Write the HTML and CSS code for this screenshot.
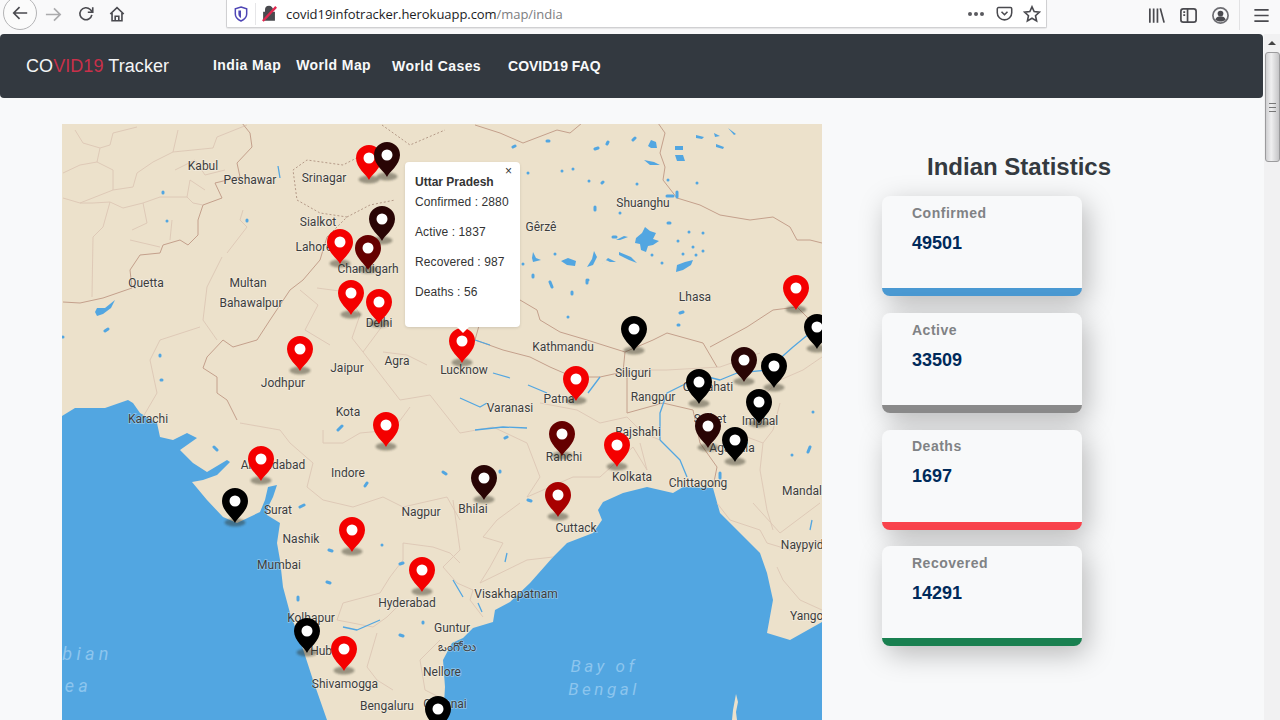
FILE: index.html
```html
<!DOCTYPE html>
<html lang="en">
<head>
<meta charset="utf-8">
<title>COVID19 Tracker</title>
<link rel="stylesheet" href="styles.css">
</head>
<body>
<header class="toolbar">
  <div class="nav-buttons">
    <span class="back-btn"><svg class="ico" viewBox="0 0 20 20"><path d="M18 10H3M9.500 3.500L3 10l6.500 6.500"/></svg></span>
    <svg class="ico fwd" viewBox="0 0 20 20"><path d="M2 10h15M10.500 3.500L17 10l-6.500 6.500"/></svg>
    <svg class="ico reload" viewBox="0 0 20 20"><path d="M16.500 11a6.700 6.700 0 1 1-1.800-6L17 7.500M17.500 2.500v5.500h-5.500"/></svg>
    <svg class="ico home" viewBox="0 0 20 20"><path d="M2.500 10L10 3l7.500 7M4.500 9v8.500h11V9M8 17.500v-5h4v5"/></svg>
  </div>
  <div class="urlbar">
    <svg class="shield" viewBox="0 0 16 18"><path d="M8 1l6.500 2v6c0 4-3 6.500-6.500 8-3.500-1.500-6.500-4-6.500-8V3z"/><path class="shield-in" d="M8 5v8.500C6 12.500 5 11 5 9V5z"/></svg>
    <span class="url-sep"></span>
    <svg class="lock" viewBox="0 0 18 18"><path class="lock-body" d="M3 8h11v8H3zM5 8V5a3.500 3.500 0 0 1 7 0v3"/><path class="lock-slash" d="M2 17L16 2"/></svg>
    <span class="url-text">covid19infotracker.herokuapp.com<span class="url-path">/map/india</span></span>
    <span class="url-actions">
      <span class="dots"><i></i><i></i><i></i></span>
      <svg class="ico pocket" viewBox="0 0 20 20"><path d="M3 3h14a1.500 1.500 0 0 1 1.500 1.500V9a8.500 8.500 0 0 1-17 0V4.500A1.500 1.500 0 0 1 3 3zM6.500 8l3.500 3.500L13.500 8"/></svg>
      <svg class="ico star" viewBox="0 0 20 20"><path d="M10 2l2.400 5.300 5.800.7-4.300 3.900 1.200 5.700L10 14.700l-5.100 2.900 1.200-5.700L1.800 8l5.800-.7z"/></svg>
    </span>
  </div>
  <div class="tools">
    <svg class="ico" viewBox="0 0 20 20"><path d="M3 2.500v15M7 2.500v15M11 2.500v15M14 2.500l4 15"/></svg>
    <svg class="ico" viewBox="0 0 20 20"><rect x="2" y="3" width="16" height="14" rx="2.500"/><path d="M9 3v14M4.500 6.500h2M4.500 9.500h2"/></svg>
    <svg class="ico ico-account" viewBox="0 0 20 20"><circle cx="10" cy="10" r="8"/><circle class="solid" cx="10" cy="8" r="3"/><path class="solid" d="M4.500 14.500c1-3 3-3.500 5.500-3.500s4.500.5 5.500 3.500c-3 2.500-8 2.500-11 0z"/></svg>
    <span class="tool-sep"></span>
    <svg class="ico" viewBox="0 0 20 20"><path d="M2.500 4h15M2.500 10h15M2.500 16h15"/></svg>
  </div>
</header>

<div class="viewport">
  <div class="page">
    <nav class="navbar">
      <a class="brand">CO<span class="brand-red">VID19</span> Tracker</a>
      <a class="link link-india">India Map</a>
      <a class="link link-world">World Map</a>
      <a class="link link-cases">World Cases</a>
      <a class="link link-faq">COVID19 FAQ</a>
    </nav>

    <main class="content">
      <section class="map">
        <svg class="map-svg" viewBox="62 124 760 596" width="760" height="596">
          <defs>
            <filter id="soft" x="-50%" y="-50%" width="200%" height="200%"><feGaussianBlur stdDeviation="1"/></filter>
            <g id="pin">
              <ellipse class="pin-shadow" cx="0" cy="21.500" rx="10.500" ry="4" filter="url(#soft)"/>
              <path class="pin-body" d="M0 22C-2 17-13 10-13 0A13 13 0 1 1 13 0C13 10 2 17 0 22Z"/>
              <circle class="pin-dot" r="5.500"/>
            </g>
          </defs>
          <rect class="land" x="62" y="124" width="760" height="596"/>

          <path class="water" d="M62 416L75 408 105 408 128 400 133 403 140 413 157 423 160 437 173 440 187 433 197 438 180 450 193 463 207 472 227 460 230 462 217 475 203 480 192 482 207 500 223 517 237 523 260 512 265 500 268 487 277 485 273 497 268 507 267 515 280 523 277 543 280 560 283 587 290 613 300 640 313 680 327 720 62 720Z"/>
          <path class="water" d="M443 720L445 687 443 660 452 643 463 638 473 628 493 622 495 610 510 602 530 583 553 557 567 543 593 533 602 520 598 510 603 502 623 493 647 487 673 493 683 487 713 488 720 513 740 533 760 553 767 573 773 600 767 633 790 640 822 622 822 720Z"/>
          <path class="island" d="M736 694l2 8-2 10 1 8h-5l1-10z"/>

          <path class="prov" d="M75 130L83 143 100 148 97 162 80 165 63 173M100 148L110 145 113 133 137 127M97 162L113 170 113 190 133 187 137 173 153 162 173 152 178 130M113 190L80 203 63 198M80 203L93 203 110 202 123 208 143 203M110 202L103 227 93 237 92 297M143 203L160 197 187 197 193 203 203 205M173 152L193 150 213 148 217 137 247 125M132 230L147 223 143 203M130 240L160 247M172 220L170 240M200 327L160 340 150 360 157 393 143 417M222 257L207 287 203 320 217 340M243 210L240 220 247 227 227 253M175 170L195 160 205 175 225 170M187 197L190 180 205 190"/>
          <path class="prov" d="M240 423L280 430 290 443 313 463 307 487 323 500 353 507 383 497 403 507 447 497M403 543L403 560 390 577 380 593 343 603 337 620 373 627 387 617 397 607M403 543L433 547 450 553 460 563M377 633L367 667 377 680 393 690M323 430L323 443 343 443 360 433 393 430 410 407M447 497L460 520M453 500L460 550 443 567 457 583 473 590 470 600 483 617M497 520L483 537 503 543 490 567 480 583M480 583L527 560 553 557M497 520L520 503M460 433L493 427 527 443 540 477 527 497 573 477 600 477 633 447 647 470 640 443M540 403L577 410 600 423 627 417 643 433 660 440M317 288L347 292 360 315 352 338 363 352 383 325M383 352L407 355 427 365M363 352L400 400 430 395 460 433M640 370L667 370 720 367 760 353M747 410L780 380 803 370 822 357M747 437L763 443 773 430 780 403M763 443L760 470 767 510 773 530M717 503L730 520 760 530 767 543 790 550 822 540M777 567L783 580 800 600 822 610M753 503L780 533 820 503M300 290L318 305 305 330 330 345M440 640L420 660 425 690 445 700"/>
          <path class="border" d="M63 302L80 303 103 298 132 288 130 270 140 255 160 253 163 245 180 240 188 245 198 235 198 220 203 205 222 198 215 183 240 177 237 163 252 147 250 133 242 123M237 420L227 400 217 393 217 377 203 368 207 357 223 340 233 347 257 340 270 320 290 290 303 280 320 260 327 237M658 123L665 133 660 153 665 167 663 180 677 198 700 205 720 215 750 220 773 217 790 227 797 240 810 240 822 243M475 125L500 133 523 143 557 130 570 133 582 123M475 340L503 350 530 357 550 367 573 377 600 377 623 372 625 352 587 340 560 332 540 320 537 310 520 300 480 322ZM625 352L653 340 667 333 703 343 717 367M710 347L747 327 773 310 797 307 813 323M627 370L627 413 663 403 693 410 700 443 717 467 713 487"/>
          <path class="dashed" d="M327 237L347 217 320 213 297 200 293 170 307 160 343 165 372 150M347 217L370 205 395 200M382 125L410 145 445 130"/>

          <path class="river" d="M660 440L660 413 667 393 687 383 700 375 720 380 737 373 767 370 793 347 810 333M660 440L680 460 687 477M460 398L480 407 487 403M493 373L510 378M528 385L547 393M475 430L503 427 527 428M588 393L600 377M278 166L280 178M343 627L357 630 380 620M475 340L490 345M453 580L463 597M478 603L482 612M507 553L505 562M812 520L810 530"/>
          <path class="lake-fill" d="M636 238l6-5 3-6 5 4 6 2-3 6 6 2-6 4-5 1-2 6-5-2-1-6-5-1zM676 272l1-7 8-3 8-2-2 5-8 5zM561 261l7-3 8 3-1 5-8-1zM587 267l5-8 2-8 3 6-4 8zM602 264l6-6 8 4-6 0-4-2zM533 252l3 6 5 2-8 2-1-4zM95 312l2-4 8 0 10-8-4 8-8 6-6 2zM620 240l-4 0 8-4 4 1zM619 252l12 5 6 6-8-3-10-5zM644 160l10 2 6 3-10 0zM675 155l8 0 2 6-8 0zM648 146l3-6 5 2 1 6-6 0zM675 146l8 0 0 4-8 0zM696 135l8 2-2 2-6-1zM714 133l6 3-5 1zM728 128l8 6-2 1zM716 144l8 3-1 2-7-2z"/>
          <path class="lakes" d="M613 237l3 0M513 147l2-1M595 149l3-1M633 140l2-2M607 144l1-2M547 141l2 0M562 171l0 0M573 169l0 0M528 173l0 0M589 181l0 0M602 183l1-1M637 184l0 0M697 183l0 0M668 180l0 0M667 196l6 0M677 192l0 5M595 210l0-3M620 213l0 0M668 223l2 0M689 232l0 0M703 233l0 0M678 241l0 0M693 247l0 0M703 251l0 0M683 254l0 0M696 255l0 0M662 263l0 0M652 255l0 0M555 254l0 0M587 280l0 3M550 282l2 5M572 292l0 2M533 277l0-2M523 264l0 0M105 331l3-2M163 192l0 1M167 221l0 0M247 221l0-1M160 355l0 1M161 380l1 0M63 337l0 0M217 450l-3-3M338 430l4-4M365 486l2-3M300 507l4-2M332 551l-3-1M382 545l0 0M327 582l3 1M298 597l0 3M400 564l3-1M400 635l3 1M423 623l0-1M443 472l3 2M505 438l2-1M528 500l3 1M500 472l0-1M720 473l0 5M568 317l0 0M588 280l0 0M680 313l3-1M678 325l1 0M792 455l0 0M813 412l0 0M810 447l-2 5"/>

          <g class="lbl">
            <text x="203" y="170">Kabul</text><text x="250" y="184">Peshawar</text><text x="324" y="182">Srinagar</text>
            <text x="318" y="226">Sialkot</text><text x="314" y="251">Lahore</text><text x="368" y="273">Chandigarh</text>
            <text x="146" y="287">Quetta</text><text x="248" y="287">Multan</text><text x="251" y="307">Bahawalpur</text>
            <text x="283" y="387">Jodhpur</text><text x="347" y="372">Jaipur</text><text x="397" y="365">Agra</text>
            <text x="379" y="327">Delhi</text><text x="464" y="374">Lucknow</text><text x="348" y="416">Kota</text>
            <text x="148" y="423">Karachi</text><text x="273" y="469">Ahmedabad</text><text x="348" y="477">Indore</text>
            <text x="278" y="514">Surat</text><text x="301" y="543">Nashik</text><text x="279" y="569">Mumbai</text>
            <text x="421" y="516">Nagpur</text><text x="473" y="513">Bhilai</text><text x="407" y="607">Hyderabad</text>
            <text x="311" y="622">Kolhapur</text><text x="324" y="655">Hubli</text><text x="345" y="688">Shivamogga</text>
            <text x="387" y="710">Bengaluru</text><text x="445" y="708">Chennai</text><text x="452" y="632">Guntur</text>
            <text x="457" y="651">ఒంగోలు</text>
            <text x="442" y="676">Nellore</text><text x="516" y="598">Visakhapatnam</text><text x="576" y="532">Cuttack</text>
            <text x="564" y="461">Ranchi</text><text x="559" y="403">Patna</text><text x="510" y="412">Varanasi</text>
            <text x="563" y="351">Kathmandu</text><text x="633" y="377">Siliguri</text><text x="653" y="401">Rangpur</text>
            <text x="638" y="436">Rajshahi</text><text x="632" y="481">Kolkata</text><text x="698" y="487">Chittagong</text>
            <text x="708" y="391">Guwahati</text><text x="760" y="425">Imphal</text><text x="710" y="423">Sylhet</text>
            <text x="732" y="452">Agartala</text><text x="802" y="495">Mandal</text><text x="810" y="549">Naypyidaw</text>
            <text x="810" y="620">Yangon</text><text x="695" y="301">Lhasa</text><text x="643" y="207">Shuanghu</text>
            <text x="541" y="231">Gêrzê</text>
          </g>
          <g class="sea-lbl">
            <text x="23" y="660">Arabian</text><text x="50" y="692">Sea</text>
            <text class="sea-mid" x="604" y="672">Bay of</text><text class="sea-mid" x="604" y="695">Bengal</text>
          </g>

          <use href="#pin" x="369" y="158" class="red"/>
          <use href="#pin" x="387" y="155" class="dark"/>
          <use href="#pin" x="382" y="219" class="dark"/>
          <use href="#pin" x="340" y="242" class="red"/>
          <use href="#pin" x="368" y="248" class="maroon"/>
          <use href="#pin" x="351" y="293" class="red"/>
          <use href="#pin" x="379" y="302" class="red"/>
          <use href="#pin" x="300" y="349" class="red"/>
          <use href="#pin" x="462" y="341" class="red"/>
          <use href="#pin" x="386" y="425" class="red"/>
          <use href="#pin" x="261" y="459" class="red"/>
          <use href="#pin" x="235" y="501" class="black"/>
          <use href="#pin" x="352" y="530" class="red"/>
          <use href="#pin" x="422" y="570" class="red"/>
          <use href="#pin" x="307" y="631" class="black"/>
          <use href="#pin" x="344" y="649" class="red"/>
          <use href="#pin" x="438" y="709" class="black"/>
          <use href="#pin" x="796" y="288" class="red"/>
          <use href="#pin" x="817" y="327" class="black"/>
          <use href="#pin" x="634" y="329" class="black"/>
          <use href="#pin" x="744" y="360" class="dark"/>
          <use href="#pin" x="774" y="366" class="black"/>
          <use href="#pin" x="699" y="382" class="black"/>
          <use href="#pin" x="576" y="379" class="red"/>
          <use href="#pin" x="759" y="402" class="black"/>
          <use href="#pin" x="562" y="434" class="maroon"/>
          <use href="#pin" x="708" y="426" class="dark"/>
          <use href="#pin" x="617" y="445" class="red"/>
          <use href="#pin" x="735" y="440" class="black"/>
          <use href="#pin" x="484" y="478" class="dark"/>
          <use href="#pin" x="558" y="495" class="crimson"/>
        </svg>

        <div class="popup">
          <span class="popup-close">×</span>
          <div class="popup-title">Uttar Pradesh</div>
          <div class="popup-row">Confirmed : 2880</div>
          <div class="popup-row">Active : 1837</div>
          <div class="popup-row">Recovered : 987</div>
          <div class="popup-row">Deaths : 56</div>
          <span class="popup-tip"></span>
        </div>
      </section>

      <aside class="stats">
        <h2 class="stats-title">Indian Statistics</h2>
        <div class="card card-blue"><div class="card-label">Confirmed</div><div class="card-value">49501</div></div>
        <div class="card card-grey"><div class="card-label">Active</div><div class="card-value">33509</div></div>
        <div class="card card-red"><div class="card-label">Deaths</div><div class="card-value">1697</div></div>
        <div class="card card-green"><div class="card-label">Recovered</div><div class="card-value">14291</div></div>
      </aside>
    </main>
  </div>
  <div class="scrollbar">
    <span class="scroll-up"></span>
    <span class="scroll-thumb"><span class="scroll-grip"></span></span>
  </div>
</div>
</body>
</html>
```
FILE: styles.css
```css
* { box-sizing: border-box; }
html, body { margin: 0; height: 720px; overflow: hidden; }
body { background: #f8f9fa; font-family: "Liberation Sans", Arial, sans-serif; color: #212529; }

.ico { width: 20px; height: 20px; fill: none; stroke: #4a4a4f; stroke-width: 1.8; flex: none; display: block; }
.ico .solid { fill: #4a4a4f; stroke: none; }

.toolbar { height: 34px; background: #f9f9fa; display: flex; align-items: flex-start; position: relative; }
.nav-buttons { width: 226px; height: 30px; display: flex; align-items: center; padding-left: 3px; }
.back-btn { width: 34px; height: 34px; margin-top: -4px; border: 1px solid #b4b4b6; border-radius: 50%; background: #fbfbfb; display: flex; align-items: center; justify-content: center; flex: none; }
.back-btn .ico { width: 18px; height: 18px; }
.fwd { margin-left: 7px; stroke: #ababad; width: 19px; height: 19px; margin-top: -2px; }
.reload { margin-left: 14px; width: 18px; height: 18px; margin-top: -2px; }
.home { margin-left: 13px; width: 18px; height: 18px; margin-top: -2px; }

.urlbar { width: 821px; height: 28px; background: #fff; border: 1px solid #d0d0d2; border-top: 0; border-radius: 0 0 2px 2px; box-shadow: 0 1px 1px rgba(0,0,0,.08); display: flex; align-items: center; padding-left: 7px; }
.shield { width: 14px; height: 16px; fill: none; stroke: #4f46b5; stroke-width: 1.700; flex: none; }
.shield-in { fill: #4f46b5; stroke: none; }
.url-sep { width: 1px; height: 22px; background: #e6e6e8; margin-left: 7px; flex: none; }
.lock { width: 17px; height: 17px; margin-left: 5px; flex: none; }
.lock-body { fill: #4a4a4f; stroke: #4a4a4f; stroke-width: 1.500; }
.lock-slash { stroke: #e22850; stroke-width: 2.500; fill: none; }
.url-text { margin-left: 8px; font-family: "Open Sans", sans-serif; font-size: 13px; letter-spacing: -.05px; color: #1c1c1e; white-space: nowrap; flex: none; }
.url-path { color: #7d7d80; }
.url-actions { margin-left: auto; display: flex; align-items: center; padding-right: 5px; }
.dots { display: flex; gap: 2px; margin-right: 12px; }
.dots i { width: 4px; height: 4px; border-radius: 50%; background: #5a5a5f; display: block; }
.pocket { width: 17px; height: 17px; }
.star { width: 18px; height: 18px; margin-left: 10px; }

.tools { flex: 1; height: 30px; display: flex; align-items: center; padding-left: 100px; gap: 13px; }
.tools .ico { width: 19px; height: 19px; flex: none; }
.tools .ico-account { stroke: #6e6e73; }
.tool-sep { width: 1px; height: 30px; background: #e2e2e4; margin: 0 -1px 0 -4px; flex: none; }

.viewport { display: flex; height: 686px; }
.page { width: 1264px; flex: none; }

.navbar { height: 64px; margin-right: 1px; background: #333940; border-radius: 4px; display: flex; align-items: center; padding-left: 26px; color: #fff; }
.brand { font-size: 18px; width: 187px; flex: none; color: #f4f5f6; letter-spacing: .07px; white-space: nowrap; }
.brand-red { color: #c9304a; }
.link { font-size: 14px; font-weight: 700; color: #f8f9fa; letter-spacing: .4px; white-space: nowrap; flex: none; }
.link-india { margin-top: -2px; }
.link-world { margin-left: 15px; margin-top: -2px; }
.link-cases { margin-left: 21px; }
.link-faq { margin-left: 27px; letter-spacing: 0; }

.content { display: flex; align-items: flex-start; padding-left: 62px; }
.map { width: 760px; height: 596px; margin-top: 26px; position: relative; overflow: hidden; flex: none; }
.map-svg { display: block; }

.land { fill: #ece1cb; }
.water { fill: #52a6e1; }
.island { fill: #ece1cb; }
.prov, .border, .dashed, .river, .lakes { fill: none; stroke-linejoin: round; }
.prov { stroke: #dcc6b4; stroke-width: .9; }
.border { stroke: #c4a08c; stroke-width: 1; }
.dashed { stroke: #b59a88; stroke-width: 1; stroke-dasharray: 2 2; }
.river { stroke: #52a6e1; stroke-width: 1.300; }
.lakes { stroke: #52a6e1; stroke-width: 3; stroke-linecap: round; }
.lake-fill { fill: #52a6e1; }

.lbl text { font-family: Roboto, "Noto Sans", "Liberation Sans", sans-serif; font-size: 12px; fill: #3d3d3d; text-anchor: middle; stroke: rgba(255,255,255,.35); stroke-width: 1.500; paint-order: stroke; }
.sea-lbl text { font-family: Roboto, "Liberation Sans", sans-serif; font-size: 18px; font-style: italic; fill: #8cc5ee; letter-spacing: 4.300px; }
.sea-lbl .sea-mid { text-anchor: middle; font-size: 17px; letter-spacing: 3.500px; }

.pin-shadow { fill: #2a2a1e; opacity: .42; }
.pin-dot { fill: #fff; }
.pin-body { fill: currentColor; }
.red { color: #f40000; }
.black { color: #000; }
.dark { color: #290505; }
.maroon { color: #650000; }
.crimson { color: #a80000; }

.popup { position: absolute; left: 343px; top: 38px; width: 115px; height: 165px; background: #fff; border-radius: 4px; padding: 10px 10px; font-size: 12px; line-height: 20px; color: #333; box-shadow: 0 1px 3px rgba(0,0,0,.12); }
.popup-close { position: absolute; right: 8px; top: 2px; font-size: 12px; line-height: 14px; color: #333; }
.popup-title { font-weight: 700; }
.popup-row { margin-bottom: 10px; letter-spacing: .1px; white-space: nowrap; }
.popup-tip { position: absolute; left: 50%; bottom: -6px; margin-left: -7px; border-left: 7px solid transparent; border-right: 7px solid transparent; border-top: 7px solid #fff; }

.stats { width: 274px; margin-left: 60px; padding-top: 55px; flex: none; }
.stats-title { margin: 0 0 15px; font-size: 24px; line-height: 28px; font-weight: 700; color: #343a40; text-align: center; }
.card { width: 200px; height: 100px; background: #f8f9fa; border-radius: 8px; border-bottom: 8px solid; padding: 9px 0 0 30px; margin-bottom: 17px; box-shadow: 5px 8px 28px rgba(0,0,0,.26); position: relative; }
.card-label { font-size: 14px; font-weight: 700; line-height: 17px; color: #808285; letter-spacing: .5px; }
.card-value { font-size: 18px; font-weight: 700; line-height: 21px; margin-top: 11px; color: #002a5a; }
.card-blue { border-color: #4a99d2; }
.card-grey { border-color: #8a8a8a; }
.card-red { border-color: #f9434c; margin-bottom: 16px; padding-top: 8px; }
.card-green { border-color: #198050; }

.scrollbar { width: 16px; flex: none; background: #f1f1f2; position: relative; display: flex; flex-direction: column; align-items: center; }
.scroll-up { margin-top: 7px; border-left: 4px solid transparent; border-right: 4px solid transparent; border-bottom: 4px solid #444; }
.scroll-thumb { margin-top: 7px; width: 15px; height: 110px; background: linear-gradient(90deg, #cfcfd1, #efeff0 40%, #c5c5c7); border: 1px solid #9b9b9d; border-radius: 3px; display: flex; align-items: center; justify-content: center; }
.scroll-grip { width: 7px; height: 9px; border-top: 1px solid #777; border-bottom: 1px solid #777; background: linear-gradient(#777, #777) center / 100% 1px no-repeat; }
```
